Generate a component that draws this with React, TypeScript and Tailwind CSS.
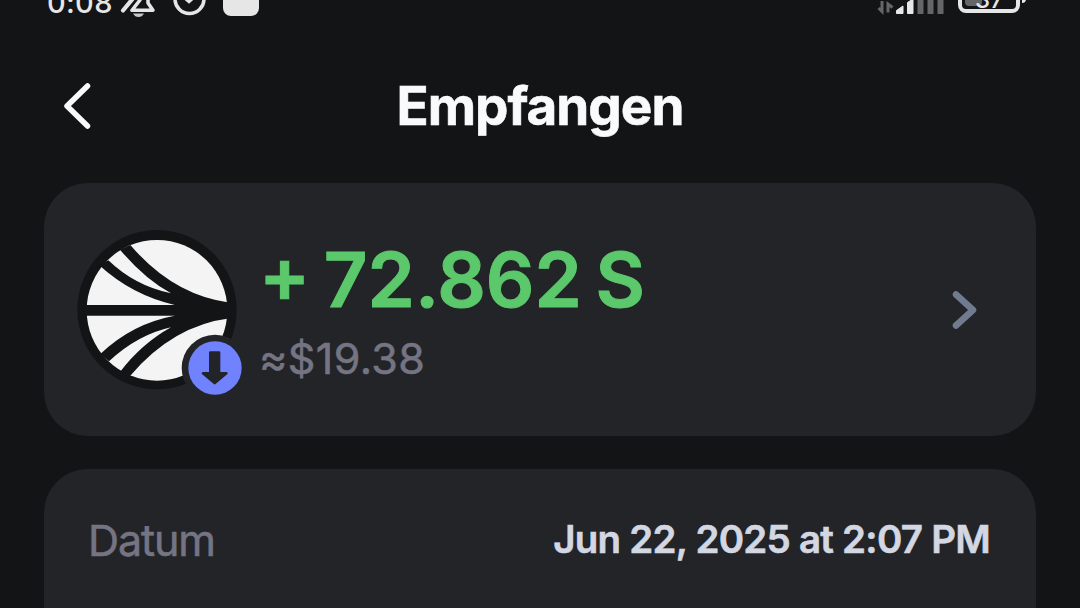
import type { ReactNode } from "react"

const details = [{ label: "Datum", value: "Jun 22, 2025 at 2:07 PM" }]

/* ----------------------------- */
/* Status bar (scrolled half out) */
/* ----------------------------- */
function StatusBar() {
  return (
    <div className="flex h-5 shrink-0 items-end justify-between overflow-hidden pr-[54px] pl-[47px]">
      <div className="flex items-end">
        <span className="mb-[3px] w-[73px] text-[29px] leading-7 font-medium tracking-[0.3px] whitespace-nowrap text-[#e6e6e6]">
          0:08
        </span>
        <svg width="37" height="20" viewBox="120 0 37 20" fill="none" stroke="#e6e6e6">
          <path d="M135 -4L123 10.500" strokeWidth="4.200" strokeLinecap="round" />
          <path d="M140 0L132 10.300H153L148 3V-4" strokeWidth="3.500" strokeLinecap="round" strokeLinejoin="round" />
          <path d="M133 13.500H144Q142 17 138.500 17Q135 17 133 13.500Z" fill="#c8c8c8" stroke="none" />
        </svg>
        <svg className="ml-3" width="42" height="20" viewBox="169 0 42 20" fill="none" stroke="#e6e6e6">
          <circle cx="189.500" cy="-1" r="14.500" strokeWidth="3.500" />
          <path d="M183 -4L189 1L197 -6" strokeWidth="4" />
        </svg>
        <div className="mb-1 ml-[12px] h-9 w-9 rounded-[8px] bg-[#e6e6e6]" />
      </div>

      <div className="flex items-end">
        <svg width="68" height="20" viewBox="876 0 68 20" fill="none">
          <path d="M881 1V11.500L877.500 8M887 12.500V4L891.500 7.500" stroke="#656667" strokeWidth="3" />
          <path d="M895.500 13.500V10.500L902 6V13.500Z" fill="#e8e8e8" stroke="#e8e8e8" strokeLinejoin="round" />
          <path d="M906.500 13.500V2.500L912 -1V13.500Z" fill="#e8e8e8" stroke="#e8e8e8" strokeLinejoin="round" />
          <path d="M916.500 0H922.500V14H916.500ZM926.500 0H932.500V14H926.500ZM936.500 0H942.500V14H936.500Z" fill="#656667" />
        </svg>
        <div className="mb-[7px] ml-[13px] flex h-8 w-[62px] items-end rounded-[8px] border-4 border-[#e6e6e6] p-[3px]">
          <div className="h-5 w-[17px] rounded-[4px] bg-[#656667]" />
          <span className="-mb-[5px] -ml-[7px] text-[24px] leading-[22px] font-medium text-[#e6e6e6]">37</span>
        </div>
        <div className="mb-[17px] ml-[2px] h-3 w-1 rounded-r bg-[#e6e6e6]" />
      </div>
    </div>
  )
}

function SonicLogo() {
  return (
    <svg width="160" height="160" viewBox="21 29 480 480">
      <circle cx="261" cy="268" r="239" fill="#131415" />
      <circle cx="261" cy="270" r="211" fill="#f4f4f4" />
      <g fill="#131415">
        <path d="M40 254H315V286H40Z" />
        <path d="M181 74Q310 225 480 247V294Q310 315 181 466L150 455Q215 370 303 321Q203 343 117 423L91 401Q185 310 314 286V254Q185 224 88 135L115 120Q195 197 303 219Q223 175 150 88Z" />
      </g>
    </svg>
  )
}

function ReceiveBadge() {
  return (
    <svg width="68" height="68" viewBox="334 342 204 204" className="absolute top-[104px] left-[104px]">
      <circle cx="436" cy="444" r="100" fill="#232428" />
      <circle cx="436" cy="444" r="80" fill="#7182ff" />
      <path
        d="M422 398H448V460H470L435 489L400 460H422Z"
        fill="#232428"
        stroke="#232428"
        strokeWidth="8"
        strokeLinejoin="round"
      />
    </svg>
  )
}

function DetailRow({ label, children }: { label: string; children: ReactNode }) {
  return (
    <div className="flex h-[142px] items-center justify-between pr-[46px] pl-[44px] whitespace-nowrap">
      <span className="text-[43px] tracking-[-1.1px] text-[#747482] [-webkit-text-stroke:0.6px_#747482]">{label}</span>
      <span className="text-[38.5px] font-semibold tracking-[-0.75px] text-[#d3d7e2] [-webkit-text-stroke:0.6px_#d3d7e2]">
        {children}
      </span>
    </div>
  )
}

/* ----------------------------- */
/* Screen */
/* ----------------------------- */
export default function App() {
  return (
    <div className="flex h-[608px] w-[1080px] flex-col overflow-hidden bg-[#131416] font-['Inter',sans-serif]">
      <StatusBar />

      {/* HEADER */}
      <header className="grid h-[163px] shrink-0 grid-cols-[1fr_auto_1fr] items-center px-[60px]">
        <button aria-label="Zurück" className="mt-[9px] w-9">
          <svg width="36" height="50" viewBox="60 81 36 50" fill="none">
            <path d="M87.500 86L67 106L87.500 126" stroke="#f8fafc" strokeWidth="5.500" strokeLinecap="round" strokeLinejoin="round" />
          </svg>
        </button>
        <h1 className="mt-[9px] text-[53px] leading-none font-bold tracking-[-1px] text-[#f8fafc] [-webkit-text-stroke:0.6px_#f8fafc]">
          Empfangen
        </h1>
      </header>

      {/* AMOUNT */}
      <button className="mx-11 flex h-[253px] shrink-0 items-center rounded-[44px] bg-[#232428] pr-[58px] pl-[33px] text-left">
        <div className="relative h-40 w-40">
          <SonicLogo />
          <ReceiveBadge />
        </div>
        <div className="ml-[22px] flex flex-1 flex-col whitespace-nowrap">
          <span className="text-[76px] leading-[86px] font-semibold [word-spacing:-5.500px] text-[#5bc96b] [-webkit-text-stroke:1px_#5bc96b]">
            + 72.862 S
          </span>
          <span className="mt-[11px] text-[43px] leading-[50px] tracking-[0.4px] text-[#747482] [-webkit-text-stroke:0.6px_#747482]">
            ≈$19.38
          </span>
        </div>
        <svg width="28" height="42" viewBox="950 289 28 42" fill="none">
          <path d="M956 294.500L973 310L956 325.500" stroke="#707b90" strokeWidth="6.500" strokeLinecap="round" strokeLinejoin="round" />
        </svg>
      </button>

      {/* DETAILS */}
      <div className="mx-11 mt-[33px] h-[600px] shrink-0 rounded-t-[44px] bg-[#232428]">
        {details.map((row) => (
          <DetailRow key={row.label} label={row.label}>
            {row.value}
          </DetailRow>
        ))}
      </div>
    </div>
  )
}
